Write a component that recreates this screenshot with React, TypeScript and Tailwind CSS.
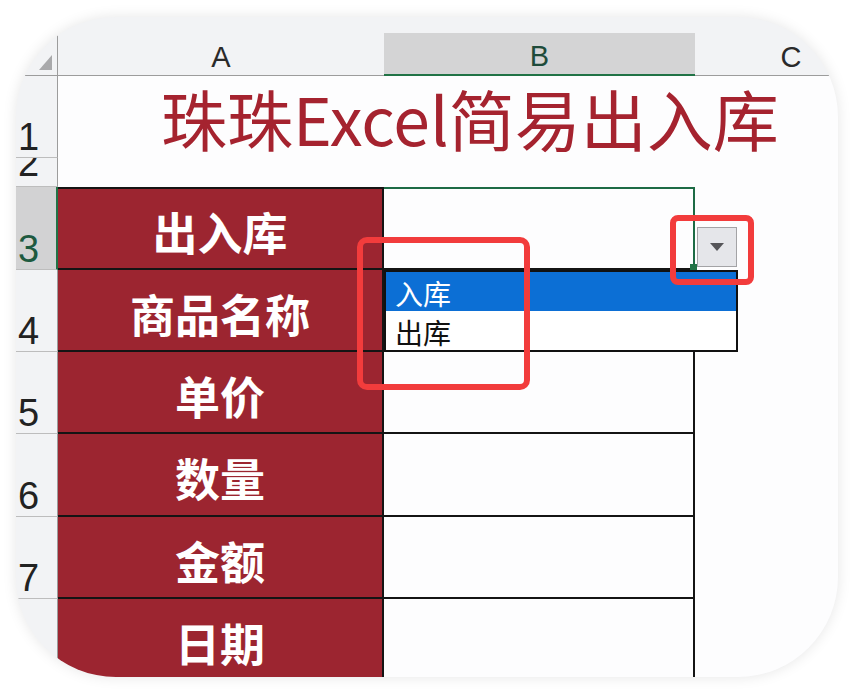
import React from 'react';

const rows = [
  { n: '3', label: '出入库', h: 'h-[83px]', sel: true },
  { n: '4', label: '商品名称', h: 'h-[82px]', sel: false },
  { n: '5', label: '单价', h: 'h-[82px]', sel: false },
  { n: '6', label: '数量', h: 'h-[83px]', sel: false },
  { n: '7', label: '金额', h: 'h-[82px]', sel: false },
  { n: '8', label: '日期', h: 'h-[82px]', sel: false },
];

const digitCls =
  "flex items-end pl-[2px] overflow-hidden text-[38px] leading-none font-['Liberation_Sans',sans-serif]";

export default function App() {
  return (
    <div className="w-[852px] h-[692px] bg-white pt-[17px] pl-[16px] font-['Noto_Sans_CJK_SC',sans-serif]">
      <div className="relative w-[822px] h-[660px] rounded-[100px] overflow-hidden bg-[#f2f3f5] shadow-[0_0_14px_rgba(0,0,0,0.10)] pt-[16px]">
        {/* column header */}
        <div className="flex h-[43px] font-['Liberation_Sans',sans-serif] text-[29px] leading-none">
          <div className="relative w-[42px] shrink-0 border-r border-b border-[#9c9c9c]">
            <svg className="absolute right-[5px] bottom-[5px]" width="13" height="15" viewBox="0 0 13 15">
              <polygon points="13,0 13,15 0,15" fill="#a9a9ab" />
            </svg>
          </div>
          <div className="w-[326px] shrink-0 border-b border-[#9c9c9c] flex items-center justify-center pt-[6px] text-[#2a2a2a]">
            A
          </div>
          <div className="w-[311px] shrink-0 bg-[#d4d4d5] border-b-2 border-[#217346] flex items-center justify-center pt-[6px] text-[#1e4b3a]">
            B
          </div>
          <div className="w-[192px] shrink-0 border-b border-[#9c9c9c] flex items-center justify-center pt-[6px] text-[#2a2a2a]">
            C
          </div>
        </div>

        {/* row 1 */}
        <div className="flex h-[82px]">
          <div className={`w-[42px] shrink-0 bg-[#f2f3f5] border-r border-b border-r-[#9c9c9c] border-b-[#bdbdbd] text-[#222] pb-[1px] ${digitCls}`}>
            1
          </div>
          <div className="flex-1 bg-[#fdfdfe] flex items-center pl-[103px] overflow-hidden">
            <span className="whitespace-nowrap text-[66px] leading-none text-[#a5232f]">
              珠珠Excel简易出入库
            </span>
          </div>
        </div>

        {/* row 2 */}
        <div className="flex h-[29px]">
          <div className={`w-[42px] shrink-0 bg-[#f2f3f5] border-r border-b border-r-[#9c9c9c] border-b-[#bdbdbd] text-[#222] pb-[4px] ${digitCls}`}>
            2
          </div>
          <div className="flex-1 bg-[#fdfdfe]" />
        </div>

        {/* data rows */}
        {rows.map((r, i) => (
          <div key={r.n} className={`flex ${r.h}`}>
            <div
              className={`w-[42px] shrink-0 border-b border-b-[#bdbdbd] pb-[1px] ${digitCls} ${
                r.sel
                  ? 'bg-[#d2d2d3] border-r-2 border-r-[#217346] text-[#1e5a40]'
                  : 'bg-[#f2f3f5] border-r border-r-[#9c9c9c] text-[#222]'
              }`}
            >
              {r.n}
            </div>
            <div
              className={`w-[326px] shrink-0 bg-[#9c2530] border-b-2 border-r-2 border-[#141414] flex items-center justify-center pt-[6px] text-[45px] font-bold leading-none text-white ${
                i === 0 ? 'border-t-2' : ''
              }`}
            >
              {r.label}
            </div>
            <div
              className={`w-[311px] shrink-0 bg-[#fdfdfe] border-b-2 border-b-[#141414] ${
                r.sel
                  ? 'border-t-2 border-t-[#1d6b45] border-r-2 border-r-[#1d6b45]'
                  : 'border-r-2 border-r-[#141414]'
              }`}
            />
            <div className="flex-1 bg-[#fdfdfe]" />
          </div>
        ))}

        {/* fill handle */}
        <div className="absolute left-[674px] top-[247px] w-[7px] h-[7px] bg-[#217346]" />

        {/* dropdown arrow button */}
        <div className="absolute left-[681px] top-[210px] w-[40px] h-[40px] bg-[#e5e6ea] border border-[#a3a3a6] flex items-center justify-center">
          <svg width="14" height="8" viewBox="0 0 14 8">
            <polygon points="0,0 14,0 7,8" fill="#555559" />
          </svg>
        </div>

        {/* dropdown list */}
        <div className="absolute left-[368px] top-[253px] w-[354px] h-[82px] bg-white border-2 border-[#111] flex flex-col text-[28px] leading-none">
          <div className="h-[39px] bg-[#0c6fd5] text-white flex items-center pl-[9px] pt-[2px]">入库</div>
          <div className="flex-1 text-[#111] flex items-center pl-[9px] pt-[3px]">出库</div>
        </div>

        {/* red annotation boxes */}
        <div className="absolute left-[341px] top-[220px] w-[173px] h-[153px] border-[6px] border-[#f23c3c] rounded-[10px]" />
        <div className="absolute left-[654px] top-[198px] w-[84px] h-[70px] border-[6px] border-[#f23c3c] rounded-[8px]" />
      </div>
    </div>
  );
}
